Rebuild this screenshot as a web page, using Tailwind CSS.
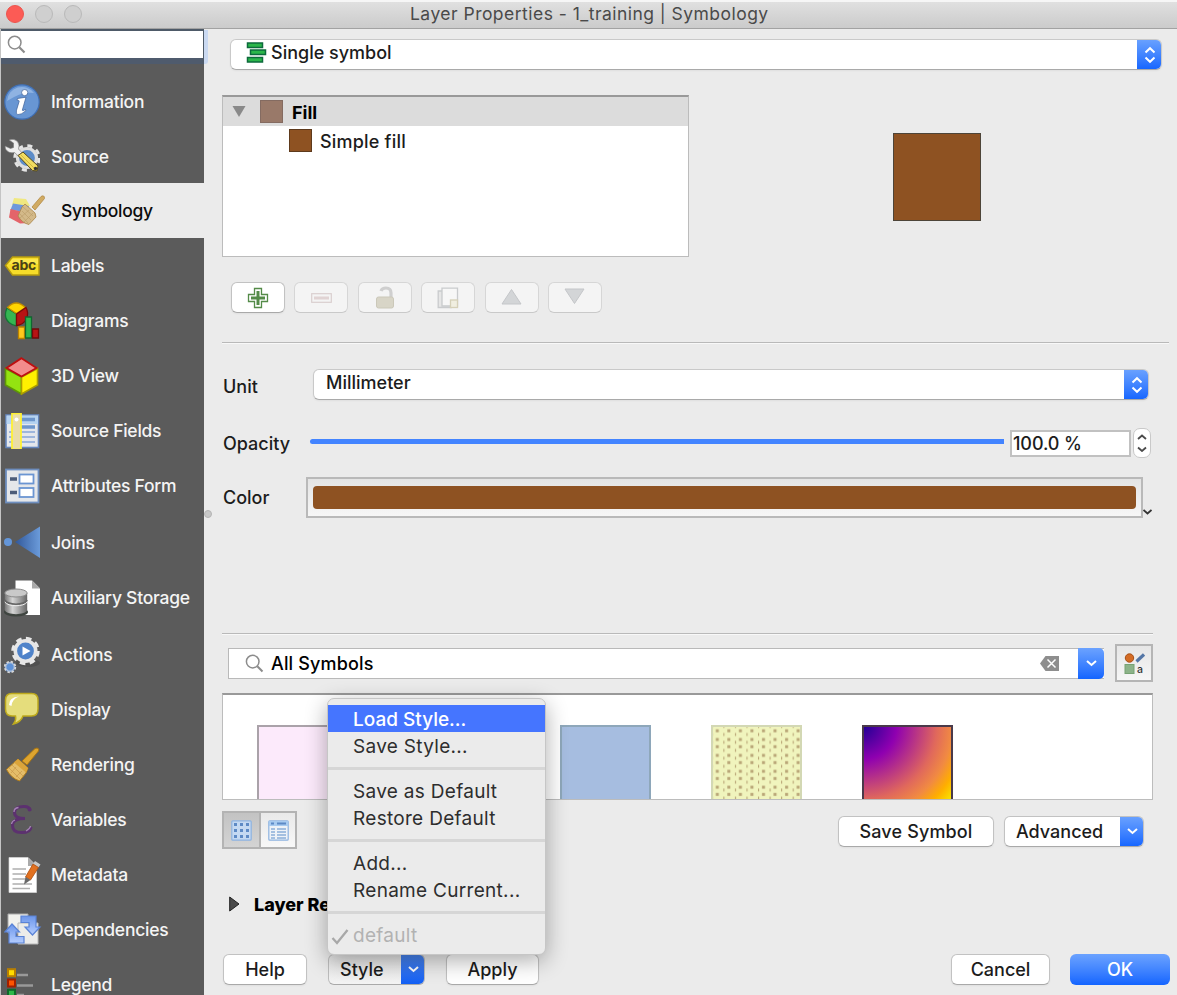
<!DOCTYPE html>
<html lang="en">
<head>
<meta charset="utf-8">
<title>Layer Properties</title>
<script src="https://cdn.jsdelivr.net/npm/@tailwindcss/browser@4"></script>
</head>
<body class="bg-[#ebebeb]">
<div class="relative flex h-[995px] w-[1177px] flex-col overflow-hidden bg-[#ebebeb] font-['Inter','Liberation_Sans',sans-serif] text-[17.5px] font-medium text-[#1c1c1c] whitespace-nowrap">

  <!-- Title bar -->
  <header class="relative flex h-[29px] shrink-0 items-center border-t-2 border-b border-t-[#f6f6f6] border-b-[#a2a2a2] bg-linear-to-b from-[#e0e0e0] to-[#cbcbcb]">
    <div class="-mt-[2px] flex gap-[11px] pl-[6px]">
      <span class="size-[18px] rounded-full border border-[#ec544d] bg-[#fc5b55]"></span>
      <span class="size-[18px] rounded-full border border-[#b9b9b9] bg-[#cfcfcf]"></span>
      <span class="size-[18px] rounded-full border border-[#b9b9b9] bg-[#cfcfcf]"></span>
    </div>
    <h1 class="absolute left-[410px] -mt-[2px] text-[17.5px] font-normal tracking-[0.47px] text-[#4a4a4a]">Layer Properties - 1_training | Symbology</h1>
  </header>

  <div class="flex min-h-0 flex-1">
    <!-- Sidebar -->
    <nav class="flex w-[204px] shrink-0 flex-col border-l border-[#c4c4c4] bg-[#5b5b5b] text-[#f4f4f4]">
      <div class="relative h-[35px] shrink-0 border-t-2 border-r border-[#4e5a68] bg-[#4f5b6d]">
        <div class="flex h-[27px] items-center bg-white pl-[6px]">
          <svg class="size-[19px]" viewBox="0 0 19 19" fill="none" stroke="#8c8c8c"><circle cx="7.7" cy="7.6" r="6.3" stroke-width="1.5"/><path d="M12.3 12.3L17.5 17.5" stroke-width="2.2"/></svg>
        </div>
        <span class="absolute -top-px -right-[5px] h-[34px] w-[4px] rounded-br-[3px] bg-[#cad9f1]"></span>
      </div>
      <ul class="flex shrink-0 flex-col pt-[10px] tracking-[-0.25px] [&>li>span]:mt-[2px]">
        <li class="flex h-[55px] items-center gap-[11px] pl-[3px]">
          <svg class="size-[36px]" viewBox="0 0 36 36"><circle cx="18" cy="18" r="17.2" fill="#6896d3" stroke="#3f6fb5" stroke-width="1.2"/><path d="M3 17A15 15 0 0 1 30 9Q18 7 3 17Z" fill="#8fb3e2"/><g fill="#fff" stroke="#3c5f95" stroke-width=".7"><circle cx="20.7" cy="8.6" r="3.1"/><path d="M13.500 14.500L22 13.200L18.300 26.200Q18 27.500 21.500 25.400L21.800 26.800Q17 31 13.700 30.600Q11.600 29.800 12.500 26.200L15.200 17.200Q15.300 16 13 16.200Z"/></g></svg>
          <span>Information</span>
        </li>
        <li class="flex h-[54px] items-center gap-[11px] pl-[3px]">
          <svg class="size-[36px]" viewBox="0 0 36 36"><circle cx="23" cy="20" r="12.2" fill="none" stroke="#e4e4e4" stroke-width="3" stroke-dasharray="5 4.580"/><circle cx="23" cy="20" r="9.500" fill="#5d8cc8" stroke="#dedede" stroke-width="3.200"/><path d="M5 2Q10 0 13.500 3.500Q16 7 14.500 11L20 17L16.500 20L10.500 14.500Q5 16 1.500 11L1 8L6.500 10.500L9.500 9.500L9.500 5Z" fill="#eee" stroke="#777" stroke-width=".6"/><path d="M14 17.500L19 14L34 28L33 33L28.500 32.500Z" fill="#f1dc60" stroke="#55491c" stroke-width="1"/><path d="M16.500 16.500L30 30" stroke="#c9ad38" stroke-width=".8"/><circle cx="31.500" cy="30.500" r="1.700" fill="#333"/></svg>
          <span>Source</span>
        </li>
        <li class="flex h-[55px] items-center gap-[16px] bg-[#ebebeb] pl-[7px] text-[#0c0c0c]">
          <svg class="h-[32px] w-[37px]" viewBox="0 0 37 32"><path d="M6 3L18 4L22 11L4 10Z" fill="#f0e880"/><path d="M5 8.500L21 11L18 17L2.500 15Z" fill="#6f98dc"/><path d="M2.500 14L15 17L21 28L12 28.500L1 22.500Z" fill="#e4646a"/><path d="M24 12L33 1.500Q36.500-.5 36.500 3.500L27 15Z" fill="#d1ab63" stroke="#b28a45" stroke-width=".8"/><path d="M17 9L27 18L28 22L21 29.500Q14 28 10 21L14 12Z" fill="#d3b989" stroke="#aa8446" stroke-width=".8"/><path d="M15 12L25 21M14 16L23 25M12 19L20 28M12 23L21 15M16 27L25 18" stroke="#b99a66" stroke-width=".6"/></svg>
          <span>Symbology</span>
        </li>
        <li class="flex h-[55px] items-center gap-[11px] pl-[3px]">
          <svg class="size-[36px]" viewBox="0 0 36 36"><path d="M1.500 17.500L8.500 9H35V27H8.500Z" fill="#f6dc29" stroke="#b59b0f" stroke-width="1.500"/><path d="M8 11H34V16H5Z" fill="#fff06a" opacity=".55"/><text x="7.500" y="22" font-family="Inter" font-weight="700" font-size="13" textLength="24.500" lengthAdjust="spacingAndGlyphs" fill="#4a4215">abc</text></svg>
          <span>Labels</span>
        </li>
        <li class="flex h-[55px] items-center gap-[11px] pl-[3px]">
          <svg class="size-[38px] -mr-[2px]" viewBox="0 0 38 38"><g stroke-width="1.300"><path d="M12.500 12L3 6Q-1 15 5 20.500Q9 24 12.500 23.500Z" fill="#35b652" stroke="#157436"/><path d="M12.500 11.500L3.500 5.500Q12-3.500 21.500 5.500Z" fill="#ffd500" stroke="#c28f00"/><path d="M12.500 12L22 5.500Q25 11 22.500 17Q19 23 12.500 23.500Z" fill="#b81414" stroke="#7a0a0a"/><path d="M14.500 25H20.500V36.500H14.500Z" fill="#ffc91c" stroke="#ba8100"/><path d="M21.500 15H27.500V36H21.500Z" fill="#2fb34d" stroke="#116630"/><path d="M28.500 27H34.500V36H28.500Z" fill="#b81414" stroke="#700a0a"/></g></svg>
          <span>Diagrams</span>
        </li>
        <li class="flex h-[55px] items-center gap-[11px] pl-[3px]">
          <svg class="size-[38px] -mr-[2px]" viewBox="0 0 38 38"><path d="M1.500 11.500L17.500 20V37L1.500 28Z" fill="#94e311" stroke="#5e9704" stroke-width="1.600"/><path d="M33.500 11.500L17.500 20V37L33.500 28Z" fill="#fff000" stroke="#ab9c00" stroke-width="1.600"/><path d="M17.500 1.200L32.500 11L17.500 19.500L2.500 11Z" fill="#f38c8c" stroke="#bd1010" stroke-width="1.800"/></svg>
          <span>3D View</span>
        </li>
        <li class="flex h-[55px] items-center gap-[11px] pl-[3px]">
          <svg class="size-[36px]" viewBox="0 0 36 36"><rect x="2" y="2" width="32.500" height="32.500" fill="#e4e7ec" stroke="#6485bb" stroke-width="1.600"/><path d="M2.500 2.500H34V11H2.500Z" fill="#b6d3f1"/><path d="M7 6.500H31M13 14H31" stroke="#6d96cc" stroke-width="3.500"/><path d="M5 19H31M5 24H31M5 29H31" stroke="#86a7d6" stroke-width="1.400"/><rect x="8" y=".5" width="9" height="36" fill="#eadda8" stroke="#fff133" stroke-width="1.800"/><circle cx="12.500" cy="6.500" r="2" fill="#fff"/></svg>
          <span>Source Fields</span>
        </li>
        <li class="flex h-[55px] items-center gap-[11px] pl-[3px]">
          <svg class="size-[36px]" viewBox="0 0 36 36"><rect x="2" y="1.500" width="32.500" height="33" fill="#e5e7ea" stroke="#6e8ebe" stroke-width="1.800"/><path d="M6 11H13M6 24.500H13" stroke="#4c5c78" stroke-width="3.500"/><rect x="15.500" y="6.500" width="14" height="9" fill="#fff" stroke="#6b95d2" stroke-width="1.800"/><rect x="15.500" y="20" width="14" height="9" fill="#fff" stroke="#6b95d2" stroke-width="1.800"/></svg>
          <span>Attributes Form</span>
        </li>
        <li class="mt-[2px] flex h-[55px] items-center gap-[11px] pl-[3px]">
          <svg class="size-[36px]" viewBox="0 0 36 36"><defs><linearGradient id="jg"><stop offset="0" stop-color="#31589a"/><stop offset="1" stop-color="#6b9bda"/></linearGradient></defs><circle cx="4" cy="17" r="4" fill="#6496d9"/><path d="M11 17L36 1.500V33Z" fill="url(#jg)"/></svg>
          <span>Joins</span>
        </li>
        <li class="flex h-[55px] items-center gap-[11px] pl-[3px]">
          <svg class="size-[38px] -mr-[2px]" viewBox="0 0 38 38"><defs><linearGradient id="dg"><stop offset="0" stop-color="#777"/><stop offset=".35" stop-color="#d5d5d5"/><stop offset="1" stop-color="#666"/></linearGradient></defs><path d="M11.500 1.500H28L36 9.500V36H11.500Z" fill="#fff"/><path d="M28 1.500V9.500H36Z" fill="#aaa"/><ellipse cx="12" cy="33" rx="12" ry="4.500" fill="#3f4540"/><path d="M.8 14V31C2 36.500 22 36.500 23.200 31V14Z" fill="url(#dg)"/><path d="M.8 21C4 26.500 20 26.500 23.200 21" fill="none" stroke="#666" stroke-width="1.500"/><path d="M.8 23C4 28 20 28 23.200 23" fill="none" stroke="#eee"/><ellipse cx="12" cy="14" rx="11.200" ry="4" fill="#c9c9c9" stroke="#8a8a8a"/></svg>
          <span>Auxiliary Storage</span>
        </li>
        <li class="mt-[2px] flex h-[55px] items-center gap-[11px] pl-[3px]">
          <svg class="size-[38px] -mr-[2px]" viewBox="0 0 38 38"><ellipse cx="24" cy="27" rx="12" ry="4" fill="#4a4a4a" opacity=".6"/><circle cx="21.500" cy="15" r="12.500" fill="none" stroke="#e8e8e8" stroke-width="3.500" stroke-dasharray="5.500 4.320"/><circle cx="21.500" cy="15" r="10.200" fill="#4f83ca" stroke="#e6e6e6" stroke-width="3.600"/><path d="M18.500 10.500L26.500 15L18.500 19.500Z" fill="#fff"/><circle cx="6" cy="31" r="5.300" fill="#5e92d8" stroke="#d8d8d8" stroke-width="1.800" stroke-dasharray="2.400 1.760"/><circle cx="6" cy="31" r="4.200" fill="#5e92d8" stroke="#c8cdd5" stroke-width="1"/></svg>
          <span>Actions</span>
        </li>
        <li class="flex h-[55px] items-center gap-[11px] pl-[3px]">
          <svg class="size-[36px]" viewBox="0 0 36 36"><path d="M8 1.500H27.500Q34 1.500 34 8V17Q34 24 27.500 24H19Q17 30 9.500 32Q12.500 28 11.500 24H8Q1.500 24 1.500 17V8Q1.500 1.500 8 1.500Z" fill="#e5dd7c" stroke="#bda91c" stroke-width="1.500"/><path d="M5 13Q5 5 15 4.500Q8 7 7.500 14Z" fill="#fff"/></svg>
          <span>Display</span>
        </li>
        <li class="flex h-[55px] items-center gap-[11px] pl-[3px]">
          <svg class="size-[36px]" viewBox="0 0 36 36"><path d="M18 14L31 1.500Q35.500 0 34.500 4L23 18Z" fill="#dda42f" stroke="#a87413"/><path d="M14 12L24 21L22 26L15.500 34Q7 31 2.500 22.500Z" fill="#e4bd69" stroke="#b27d1a"/><path d="M14 12L24 21L22 25.500L10 15.500Z" fill="#dba43a"/><path d="M8 18L19 29M5 21L16 32M7 26L12 20M12 30L18 24" stroke="#c8984a" stroke-width=".7"/></svg>
          <span>Rendering</span>
        </li>
        <li class="flex h-[55px] items-center gap-[11px] pl-[3px]">
          <svg class="size-[36px]" viewBox="0 0 36 36" fill="none" stroke="#5c316f" stroke-width="3"><path d="M26 8.500Q26 4.500 20 4.500Q10.500 4.500 10.500 10.500Q10.500 16.500 21 16.500Q8.500 16.500 8.500 23.500Q8.500 30.500 17.500 30.500Q26.500 30.500 27 25"/><circle cx="25.500" cy="7.500" r="1" stroke-width="2"/><path d="M10 10Q10 6 14.500 5.500M7.500 22Q8 19 11 18M22 29Q26 27 26.500 24" stroke="#a483b4" stroke-width="1.300"/></svg>
          <span>Variables</span>
        </li>
        <li class="flex h-[55px] items-center gap-[11px] pl-[3px]">
          <svg class="size-[38px] -mr-[2px]" viewBox="0 0 38 38"><path d="M5 1.500H24L32.500 10V36.500H5Z" fill="#fff" stroke="#d8d8d8" stroke-width=".7"/><path d="M24 1.500V10H32.500Z" fill="#aaa"/><path d="M8.500 13H22M8.500 18H22M8.500 23H22M8.500 28H28M8.500 32.500H26" stroke="#aeaeae" stroke-width="1.500"/><path d="M31 5L36.500 8.500L34 12L28.500 8.500Z" fill="#c9c9c9"/><path d="M29 8L34.500 11.500L26.500 24L21.500 21Z" fill="#e27120" stroke="#a84b0e" stroke-width=".8"/><path d="M21.500 21L26.500 24L20 28.500Z" fill="#686868"/></svg>
          <span>Metadata</span>
        </li>
        <li class="flex h-[55px] items-center gap-[11px] pl-[3px]">
          <svg class="size-[38px] -mr-[2px]" viewBox="0 0 38 38"><path d="M4 3H24V22H4Z" fill="#f2f2ee" stroke="#aaa"/><path d="M14 12H34V33H14Z" fill="#ececea" stroke="#b9b9b9"/><defs><linearGradient id="ag" y2="1" x2="0"><stop offset="0" stop-color="#6c96ea"/><stop offset="1" stop-color="#b4cdff"/></linearGradient></defs><path d="M17 5H32V16H36L28.500 24L21 16H25V11.500H17Z" fill="url(#ag)" stroke="#5a83d6" stroke-width="1.200"/><path d="M20 32H5V21H.8L8 13L15.500 21H12V25.500H20Z" fill="url(#ag)" stroke="#5a83d6" stroke-width="1.200"/></svg>
          <span>Dependencies</span>
        </li>
        <li class="flex h-[55px] items-center gap-[11px] pl-[3px]">
          <svg class="size-[36px]" viewBox="0 0 36 36"><path d="M13 8H24M13 18.500H29M13 28H20" stroke="#999" stroke-width="2.600"/><rect x="4" y="2.200" width="7" height="7" fill="#ffdc00" stroke="#b87f00" stroke-width="2"/><rect x="4" y="12.500" width="7" height="7" fill="#ff5400" stroke="#a02000" stroke-width="2"/><rect x="4" y="22.800" width="7" height="7" fill="#2fb84a" stroke="#0f6a2a" stroke-width="2"/></svg>
          <span>Legend</span>
        </li>
      </ul>
    </nav>

    <!-- Splitter -->
    <div class="flex w-[8px] shrink-0 pt-[481px]"><span class="size-[8px] rounded-full border border-[#b4b4b4] bg-[#c8c8c8]"></span></div>

    <!-- Symbology panel -->
    <main class="flex min-w-0 flex-1 flex-col pl-[10px] text-[18px]">
      <div class="mt-[10px] ml-[8px] flex h-[31px] w-[932px] overflow-hidden rounded-[6px] border border-[#c9c9c9] border-b-[#a9a9a9] bg-white shadow-xs">
        <svg class="mt-[2px] ml-[15px] h-[22px] w-[21px]" viewBox="0 0 21 22" fill="#2bb64a" stroke="#0d6a3c" stroke-width="1.500"><rect x="1.500" y="1" width="15" height="4.500"/><rect x="4.500" y="8" width="15" height="4.500"/><rect x="1.500" y="15.500" width="15" height="4.500"/></svg>
        <span class="-mt-px ml-[4px] flex-1">Single symbol</span>
        <span class="-my-px -mr-px flex w-[25px] items-center justify-center bg-linear-to-b from-[#6ba2ff] to-[#1264ff]"><svg class="h-[18px] w-[12px]" viewBox="0 0 12 18" fill="none" stroke="#fff" stroke-width="2"><path d="M1.500 6.500L6 2.200L10.500 6.500M1.500 11.500L6 15.800L10.500 11.500"/></svg></span>
      </div>

      <div class="mt-[25px] flex">
        <div class="h-[162px] w-[467px] border border-t-2 border-[#bcbcbc] border-t-[#999] bg-white">
          <div class="flex h-[29px] items-center bg-[#dcdcdc] pl-[9px]">
            <svg class="h-[11px] w-[14px]" viewBox="0 0 14 11"><path d="M.5 0H13.500L7 11Z" fill="#898989"/></svg>
            <span class="ml-[14px] size-[23px] border border-[#846b61] bg-[#997969]"></span>
            <span class="mt-[2px] ml-[9px] font-bold text-black">Fill</span>
          </div>
          <div class="flex h-[29px] items-center pl-[66px]">
            <span class="size-[23px] border border-[#5e3a1c] bg-[#8e5222]"></span>
            <span class="mt-[2px] ml-[8px] tracking-[0.2px]">Simple fill</span>
          </div>
        </div>
        <div class="mt-[38px] ml-[204px] size-[88px] border border-[#4d4438] bg-[#8e5222]"></div>
      </div>

      <div class="mt-[25px] ml-[9px] flex gap-[9.400px]">
        <div class="flex h-[31px] w-[54px] items-center justify-center rounded-[6px] border border-[#c2c2c2] border-b-[#a9a9a9] bg-white shadow-xs">
          <svg class="size-[22px]" viewBox="0 0 22 22" fill="none"><path d="M7.500 1.500H14.500V7.500H20.500V14.500H14.500V20.500H7.500V14.500H1.500V7.500H7.500Z" stroke="#548b48" stroke-width="1.300"/><path d="M11 4V18M4 11H18" stroke="#548b48" stroke-width="3"/></svg>
        </div>
        <div class="flex h-[31px] w-[54px] items-center justify-center rounded-[6px] border border-[#d6d6d6] border-b-[#c9c9c9] bg-[#f4f4f4]">
          <svg class="h-[10px] w-[21px]" viewBox="0 0 21 10"><rect x=".7" y=".7" width="19.600" height="8.600" fill="none" stroke="#dacfcf" stroke-width="1.200"/><path d="M3 5H18" stroke="#e0d3d3" stroke-width="3"/></svg>
        </div>
        <div class="flex h-[31px] w-[54px] items-center justify-center rounded-[6px] border border-[#d6d6d6] border-b-[#c9c9c9] bg-[#f4f4f4]">
          <svg class="h-[23px] w-[20px]" viewBox="0 0 20 23"><path d="M6 5Q7 2 11 2Q16 2 16 7V12" fill="none" stroke="#cfcfcf" stroke-width="3.200"/><rect x="1.500" y="11" width="17" height="11" rx="2" fill="#d8d5c7" stroke="#cbc8b9"/></svg>
        </div>
        <div class="flex h-[31px] w-[54px] items-center justify-center rounded-[6px] border border-[#d6d6d6] border-b-[#c9c9c9] bg-[#f4f4f4]">
          <svg class="size-[22px]" viewBox="0 0 22 22" stroke-width="1.300"><path d="M1.200 4H14V20.500H1.200Z" fill="#e6e6e6" stroke="#c9cbcd"/><path d="M5 1.200H20.500V19H5Z" fill="#f7f7f7" stroke="#c9cbcd"/><rect x="13.500" y="13" width="7" height="7.500" fill="#f0eee0" stroke="#d5d0b8"/></svg>
        </div>
        <div class="flex h-[31px] w-[54px] items-center justify-center rounded-[6px] border border-[#d6d6d6] border-b-[#c9c9c9] bg-[#f4f4f4]">
          <svg class="mb-[3px] h-[17px] w-[21px]" viewBox="0 0 21 17"><path d="M10.500 1.500L20 16H1Z" fill="#d3d5d7" stroke="#c4c6c9"/></svg>
        </div>
        <div class="flex h-[31px] w-[54px] items-center justify-center rounded-[6px] border border-[#d6d6d6] border-b-[#c9c9c9] bg-[#f4f4f4]">
          <svg class="mb-[3px] h-[17px] w-[21px]" viewBox="0 0 21 17"><path d="M10.500 15.500L20 1H1Z" fill="#d3d5d7" stroke="#c4c6c9"/></svg>
        </div>
      </div>

      <div class="mt-[29px] h-[2px] w-[947px] border-t border-b border-t-[#b9b9b9] border-b-[#f8f8f8]"></div>

      <div class="mt-[25px] flex items-start">
        <span class="mt-[4px] w-[91px] pl-px">Unit</span>
        <div class="flex h-[31px] w-[836px] overflow-hidden rounded-[6px] border border-[#c9c9c9] border-b-[#a9a9a9] bg-white shadow-xs">
          <span class="-mt-px ml-[12px] flex-1">Millimeter</span>
          <span class="-my-px -mr-px flex w-[25px] items-center justify-center bg-linear-to-b from-[#6ba2ff] to-[#1264ff]"><svg class="h-[18px] w-[12px]" viewBox="0 0 12 18" fill="none" stroke="#fff" stroke-width="2"><path d="M1.500 6.500L6 2.200L10.500 6.500M1.500 11.500L6 15.800L10.500 11.500"/></svg></span>
        </div>
      </div>

      <div class="mt-[28px] flex h-[30px] items-center">
        <span class="mt-px w-[88px] pl-px">Opacity</span>
        <span class="mb-[3px] h-[5px] w-[694px] rounded-l-full bg-[#4384ff]"></span>
        <span class="ml-[6px] flex h-[27px] w-[121px] items-center border-2 border-[#c1c1c1] bg-white pt-px pl-px tracking-[-0.1px]">100.0 %</span>
        <span class="ml-[2px] flex h-[30px] w-[18px] items-center justify-center rounded-[7px] border border-[#c9c9c9] bg-white"><svg class="h-[18px] w-[10px]" viewBox="0 0 10 18" fill="none" stroke="#4a4a4a" stroke-width="1.800"><path d="M1 5L5 1.500L9 5M1 13.500L5 17L9 13.500"/></svg></span>
      </div>

      <div class="mt-[19px] flex h-[41px] items-center">
        <span class="w-[84px] pl-px">Color</span>
        <div class="h-[41px] w-[837px] border-2 border-[#b9b9b9] bg-linear-to-b from-[#e4e4e4] to-[#f6f6f6] px-[5px] py-[7px]"><div class="h-[23px] rounded-[4px] bg-[#8e5222]"></div></div>
        <svg class="mt-[29px] h-[6px] w-[9px]" viewBox="0 0 9 6" fill="none" stroke="#333" stroke-width="1.800"><path d="M.5 1L4.500 4.500L8.500 1"/></svg>
      </div>

      <div class="mt-[115px] h-[2px] w-[931px] border-t border-b border-t-[#b9b9b9] border-b-[#f8f8f8]"></div>

      <div class="mt-[9px] flex items-center">
        <div class="ml-[6px] flex h-[31px] w-[876px] items-center border border-r-0 border-[#b9b9b9] bg-white">
          <svg class="ml-[16px] size-[19px]" viewBox="0 0 19 19" fill="none" stroke="#8c8c8c"><circle cx="7.700" cy="7.600" r="6.300" stroke-width="1.500"/><path d="M12.300 12.300L17.500 17.500" stroke-width="2"/></svg>
          <span class="ml-[7px] flex-1 tracking-[0.15px] text-black">All Symbols</span>
          <svg class="mr-[19px] h-[15px] w-[19px]" viewBox="0 0 19 15"><path d="M0 7.500L5.500 0H19V15H5.500Z" fill="#8e8e8e"/><path d="M7.500 3.500L15.500 11.500M15.500 3.500L7.500 11.500" stroke="#fff" stroke-width="1.500"/></svg>
          <span class="-my-px flex h-[31px] w-[26px] items-center justify-center rounded-r-[5px] bg-linear-to-b from-[#6ba2ff] to-[#1264ff]"><svg class="h-[7px] w-[11px]" viewBox="0 0 11 7" fill="none" stroke="#fff" stroke-width="2"><path d="M1 1L5.500 5L10 1"/></svg></span>
        </div>
        <div class="ml-[11px] flex size-[38px] items-center justify-center border-2 border-[#b5b5b5] bg-linear-to-b from-[#e6e6e6] to-[#f6f6f6]">
          <svg class="size-[21px]" viewBox="0 0 21 21"><circle cx="5.500" cy="5" r="4.200" fill="#d46c25" stroke="#a64f16"/><rect x="1" y="11.500" width="9" height="9" fill="#8cb389" stroke="#76a273"/><path d="M12.500 8.500L20 1.500" stroke="#5476a6" stroke-width="3.200"/><text x="13" y="19.500" font-family="Inter" font-size="10.500" fill="#333">a</text></svg>
        </div>
      </div>

      <div class="mt-[11px] flex h-[107px] w-[931px] gap-[60.300px] overflow-hidden border border-t-2 border-[#bcbcbc] border-t-[#999] bg-white pt-[30px] pl-[34px]">
        <div class="h-[91px] w-[91px] shrink-0 border-2 border-[#aaa2a9] bg-[#fceafb]"></div>
        <div class="h-[91px] w-[91px] shrink-0"></div>
        <div class="h-[91px] w-[91px] shrink-0 border-2 border-[#8ea7ba] bg-[#a6bde0]"></div>
        <svg class="h-[91px] w-[91px] shrink-0" viewBox="0 0 91 91"><defs><pattern id="dots" x=".8" y="3.500" width="11.550" height="15.900" patternUnits="userSpaceOnUse"><g fill="#b9a677"><rect x="4" y=".8" width="3" height="3"/><rect x="4" y="9.500" width="3" height="3"/><rect x="0" y="4.500" width="1.100" height="3"/><rect x="0" y="12.300" width="1.100" height="3"/></g></pattern></defs><rect x="1" y="1" width="89" height="92" fill="#f0f4bd"/><rect x="1" y="1" width="89" height="92" fill="url(#dots)" stroke="#d3d8b4" stroke-width="2"/></svg>
        <div class="h-[91px] w-[91px] shrink-0 border-2 border-[#4a3a4a] bg-[radial-gradient(circle_at_0_0,#1b0093_0%,#8f00b0_27%,#e0685c_58%,#f18a42_70%,#ffae00_80%,#f8f000_92%)] bg-origin-border"></div>
      </div>

      <div class="mt-[11px] flex items-start">
        <div class="flex h-[38px] w-[75px] border-2 border-[#b3b3b3]">
          <span class="flex w-[37px] items-center justify-center border-r-2 border-[#b3b3b3] bg-linear-to-b from-[#c3c3c3] to-[#d4d4d4]"><svg class="size-[21px]" viewBox="0 0 21 21"><rect x=".8" y=".8" width="19.400" height="19.400" rx="1" fill="#c4d9f2" stroke="#8eb3e0" stroke-width="1.200"/><path d="M3 4.500H18M3 10.500H18M3 16.500H18" stroke="#5d8ac5" stroke-width="3" stroke-dasharray="3 3"/></svg></span>
          <span class="flex flex-1 items-center justify-center bg-linear-to-b from-[#e9e9e9] to-[#f8f8f8]"><svg class="size-[21px]" viewBox="0 0 21 21"><rect x=".8" y=".8" width="19.400" height="19.400" rx="1" fill="#eef2f7" stroke="#8eb3e0" stroke-width="1.200"/><path d="M1 1H20V6H1Z" fill="#a8cbf0"/><path d="M3 3.500H6M9 3.500H18" stroke="#5d8ac5" stroke-width="2"/><path d="M3 9H7M9 9H18M3 12H7M9 12H18M3 15H7M9 15H18M3 18H7M9 18H18" stroke="#8bafd9" stroke-width="1.300"/></svg></span>
        </div>
        <div class="mt-[5px] ml-[541px] flex h-[31px] w-[156px] items-center justify-center rounded-[6px] border border-[#c2c2c2] border-b-[#a9a9a9] bg-white tracking-[0.15px] shadow-xs">Save Symbol</div>
        <div class="mt-[5px] ml-[10px] flex h-[31px] w-[140px] items-center overflow-hidden rounded-[6px] border border-[#c2c2c2] border-b-[#a9a9a9] bg-white shadow-xs">
          <span class="ml-[11px] flex-1">Advanced</span>
          <span class="-my-px -mr-px flex h-[31px] w-[24px] items-center justify-center bg-linear-to-b from-[#6ba2ff] to-[#1264ff]"><svg class="h-[7px] w-[11px]" viewBox="0 0 11 7" fill="none" stroke="#fff" stroke-width="2"><path d="M1 1L5.500 5L10 1"/></svg></span>
        </div>
      </div>

      <div class="mt-[42px] flex h-[26px] items-center pl-[7px]">
        <svg class="h-[16px] w-[11px]" viewBox="0 0 11 16"><path d="M.7 1L10 8L.7 15Z" fill="#4a4a4a" stroke="#222"/></svg>
        <span class="mt-px ml-[14px] w-[74px] overflow-hidden font-extrabold text-black">Layer Re</span>
      </div>

      <div class="mt-[37px] flex">
        <div class="ml-px flex h-[31px] w-[84px] items-center justify-center rounded-[6px] border border-[#c2c2c2] border-b-[#a9a9a9] bg-white shadow-xs">Help</div>
        <div class="ml-[21px] flex h-[31px] w-[97px] items-center overflow-hidden rounded-[6px] border border-[#bdbdbd] border-b-[#a9a9a9] bg-linear-to-b from-[#e4e4e4] to-[#f4f4f4]">
          <span class="ml-[11px] flex-1">Style</span>
          <span class="-my-px -mr-px flex h-[31px] w-[24px] items-center justify-center bg-linear-to-b from-[#4a85ee] to-[#0f5ef5]"><svg class="h-[7px] w-[11px]" viewBox="0 0 11 7" fill="none" stroke="#fff" stroke-width="2"><path d="M1 1L5.500 5L10 1"/></svg></span>
        </div>
        <div class="ml-[21px] flex h-[31px] w-[93px] items-center justify-center rounded-[6px] border border-[#c2c2c2] border-b-[#a9a9a9] bg-white shadow-xs">Apply</div>
        <div class="ml-[412px] flex h-[31px] w-[99px] items-center justify-center rounded-[6px] border border-[#c2c2c2] border-b-[#a9a9a9] bg-white shadow-xs">Cancel</div>
        <div class="ml-[20px] flex h-[31px] w-[100px] items-center justify-center rounded-[6px] bg-linear-to-b from-[#6ba2ff] to-[#1264ff] text-white">OK</div>
      </div>
    </main>
  </div>

  <!-- Style menu -->
  <div class="absolute top-[698px] left-[327px] flex h-[257px] w-[219px] flex-col rounded-[7px] border border-[#c6c6c6] bg-[#ebebeb] pt-[6px] text-[19px] leading-[30px] font-normal tracking-[0.3px] text-[#2e2e2e] shadow-[0_6px_22px_rgba(0,0,0,0.32)]">
    <div class="h-[27px] bg-[#4575ff] pl-[25px] font-medium tracking-normal text-white">Load Style...</div>
    <div class="h-[28px] pl-[25px]">Save Style...</div>
    <div class="my-[7px] h-[3px] bg-[#d6d6d6]"></div>
    <div class="h-[27px] pl-[25px]">Save as Default</div>
    <div class="h-[28px] pl-[25px]">Restore Default</div>
    <div class="my-[7px] h-[3px] bg-[#d6d6d6]"></div>
    <div class="h-[27px] pl-[25px]">Add...</div>
    <div class="h-[28px] pl-[25px]">Rename Current...</div>
    <div class="my-[7px] h-[3px] bg-[#d6d6d6]"></div>
    <div class="flex h-[30px] items-center pl-[3px] text-[#b2b2b2]"><svg class="h-[17px] w-[18px]" viewBox="0 0 18 17" fill="none" stroke="#a8a8a8" stroke-width="2.300"><path d="M1.500 10L6 15L16.500 2"/></svg><span class="ml-[4px]">default</span></div>
  </div>
</div>
</body>
</html>
